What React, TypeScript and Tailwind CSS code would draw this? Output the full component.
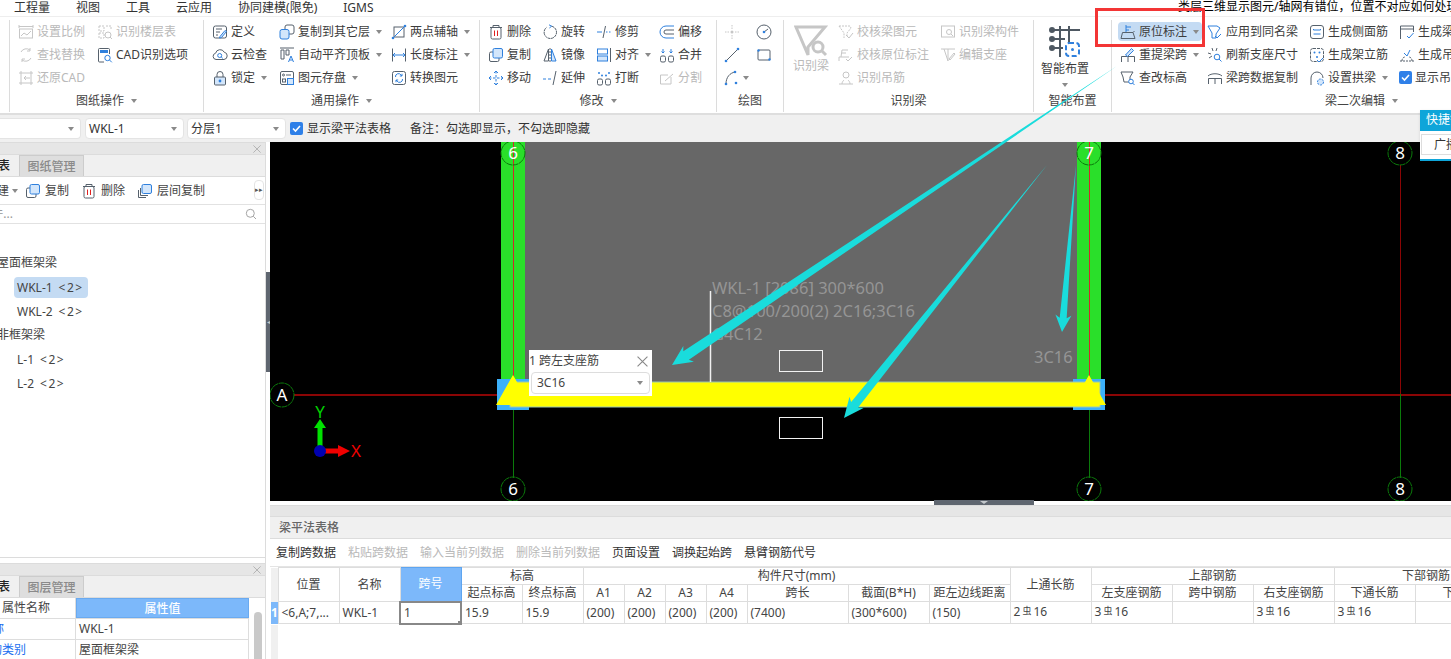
import React from 'react';

const D = '#56616c';
const B = '#2f80dd';
const L = '#d3e6fb';
const G = '#c6c6c6';

type IconProps = { c?: string; children: React.ReactNode };

const Ic = ({ c = D, children }: IconProps) => (
  <svg viewBox="0 0 16 16" className="w-4 h-4 shrink-0" fill="none" stroke={c} strokeWidth={1}>
    {children}
  </svg>
);

const Dot = ({ x, y, r = 1 }: { x: number; y: number; r?: number }) => <circle cx={x} cy={y} r={r} fill={B} stroke="none" />;

const icons: Record<string, React.ReactNode> = {
  scale: <Ic c={G}><path d="M1 1v3M15 1v3M1 2.5h14" /><rect x="1.5" y="5" width="13" height="9" /><path d="M3 12l3-3 3 2 4-4" /></Ic>,
  find: <Ic c={G}><path d="M3 5a6 6 0 0 1 9-2M13 11a6 6 0 0 1-9 2M12 1v3h-3M4 15v-3h3" /></Ic>,
  restore: <Ic c={G}><path d="M3 1v14M13 1v14M1 3h14M1 13h14M12 8H6l2-2M6 8l2 2" /></Ic>,
  floor: <Ic c={G}><path d="M2 2h5v5H2zM2 9h5v5H2zM9 2h5v4" strokeDasharray="2 1" /><circle cx="11" cy="11" r="3" /><path d="M13 13l2 2" /></Ic>,
  cadopt: <Ic><path d="M7 15H2.5a1 1 0 0 1-1-1V2.5a1 1 0 0 1 1-1h9a1 1 0 0 1 1 1V7" /><rect x="3" y="3" width="8" height="3" fill={B} stroke="none" /><circle cx="10.5" cy="11" r="2.7" stroke={B} /><path d="M12.5 13l2.3 2.3" stroke={B} /></Ic>,
  define: <Ic><rect x="1.5" y="2" width="13" height="12" rx="2" /><path d="M4 5h6M4 8h4M4 11h2" /><path d="M8 12.5l5-6 1.5 1-5 6-2 .5z" stroke={B} fill={L} /></Ic>,
  cloud: <Ic><path d="M4 12.5a3.2 3.2 0 0 1-.4-6.3 4.6 4.6 0 0 1 8.6-1 3.7 3.7 0 0 1-.2 7.3z" /><circle cx="7.7" cy="8.5" r="2" stroke={B} /><path d="M9.2 10l1.6 1.4" stroke={B} /></Ic>,
  lock: <Ic><rect x="2.5" y="7" width="11" height="8" rx="1" fill={L} /><path d="M5 7V4.5a3 3 0 0 1 6 0V7" /><circle cx="8" cy="11" r="1.4" fill={B} stroke="none" /></Ic>,
  layer: <Ic><rect x="6" y="1" width="9" height="9" rx="2" /><rect x="1" y="5.5" width="9" height="9.5" rx="2" fill={L} stroke={B} /></Ic>,
  top: <Ic><path d="M1 1h14" /><path d="M2 3h3v9H2zM7 3h3v5H7z" /><path d="M9.5 15l2.5-6 2.5 6M10.5 13h3" stroke={B} /></Ic>,
  save: <Ic><rect x="1.5" y="1.5" width="13" height="13" rx="1.5" /><circle cx="4.5" cy="5" r="1" /><path d="M7 5h5" /><rect x="3.5" y="9" width="3" height="3" /><rect x="8.5" y="8.5" width="6" height="6" fill={L} stroke={B} /></Ic>,
  two: <Ic><rect x="3" y="3" width="10" height="10" /><path d="M1 15L15 1" stroke={B} /><Dot x={2} y={14} r={1.3} /><Dot x={14} y={2} r={1.3} /></Ic>,
  len: <Ic><path d="M1.5 1.5v13M14.5 1.5v13" /><path d="M2 8h12M4 6L2 8l2 2M12 6l2 2-2 2" stroke={B} /></Ic>,
  convert: <Ic><rect x="1.5" y="1.5" width="13" height="13" rx="2" /><path d="M4.5 7a3 3 0 0 1 5.5-2l1 1M11 3.8V6H8.8M11.5 9a3 3 0 0 1-5.5 2l-1-1M5 12.2V10h2.2" stroke={B} /></Ic>,
  trash: <Ic><path d="M2 3.5h12M5 3.5V1.5h6v2" /><rect x="3" y="3.5" width="10" height="11.5" rx="1.5" /><path d="M6.5 6.5v5.5M9.5 6.5v5.5" stroke="#e02020" /></Ic>,
  copy: <Ic><rect x="1.5" y="5" width="9.5" height="9.5" rx="1.5" /><rect x="5" y="1.5" width="9.5" height="9.5" rx="1.5" fill={L} stroke={B} /></Ic>,
  move: <Ic c={B}><path d="M8 1v14M1 8h14" strokeDasharray="2.5 1.5" /><path d="M6 3l2-2 2 2M6 13l2 2 2-2M3 6L1 8l2 2M13 6l2 2-2 2" /></Ic>,
  rotate: <Ic><path d="M9.5 2.2a6.2 6.2 0 1 1-5 1.2" strokeDasharray="3 .6" /><path d="M7 .8l2.6 1.4L7.4 4" stroke={B} /></Ic>,
  mirror: <Ic><path d="M6.5 2L2 14h4.5z" /><path d="M9.5 2L14 14H9.5z" fill={L} stroke={B} /><path d="M8 1v14" strokeDasharray="2 1" /></Ic>,
  extend: <Ic><path d="M1 9h3M6 9h3" stroke={B} /><path d="M11 15l3-14" /></Ic>,
  trim: <Ic><path d="M1 8h5" stroke={B} /><path d="M10 8h1.5M13 8h1.5" stroke={B} /><path d="M9.5 2L7 14" /></Ic>,
  align: <Ic><rect x="1.5" y="2" width="10" height="5" stroke={B} /><rect x="1.5" y="9" width="10" height="5" fill={L} stroke={B} /><path d="M14.5 1v14" /></Ic>,
  split: <Ic><rect x="1.5" y="9" width="5" height="6" rx="1.5" /><rect x="9.5" y="9" width="5" height="6" rx="1.5" /><Dot x={3} y={3} /><Dot x={6} y={5.5} /><Dot x={10} y={5.5} /><Dot x={13} y={3} /></Ic>,
  offset: <Ic c={B}><path d="M15 2H7a6 6 0 0 0 0 12h8" /><path d="M15 6H7a2 2 0 0 0 0 4h8" stroke={D} /></Ic>,
  merge: <Ic><rect x="1.5" y="9" width="5" height="6" rx="1.5" /><rect x="9.5" y="9" width="5" height="6" rx="1.5" /><path d="M4 2v4M2.5 4.5L4 6l1.5-1.5M12 2v4M10.5 4.5L12 6l1.5-1.5" stroke={B} /></Ic>,
  cut: <Ic c={G}><path d="M12 7v7H1.5V5H9" /><path d="M6 11l8-7" /></Ic>,
  point: <Ic c={G}><path d="M8 1v4M8 11v4M1 8h4M11 8h4" strokeDasharray="1.5 1" /><circle cx="8" cy="8" r="1.5" fill={G} stroke="none" /></Ic>,
  circle: <Ic><circle cx="8" cy="8" r="7" /><path d="M8 8l4-3" /><Dot x={8} y={8} r={1.3} /></Ic>,
  line: <Ic><path d="M2 14L14 2" /><Dot x={2} y={14} r={1.3} /><Dot x={14} y={2} r={1.3} /></Ic>,
  rect: <Ic><rect x="2" y="3" width="12" height="10" rx="1" /><Dot x={2.5} y={3.5} r={1.2} /><Dot x={13.5} y={12.5} r={1.2} /></Ic>,
  arc: <Ic><path d="M2 14C2 7 6 3 11 2" /><Dot x={2} y={14} r={1.3} /><Dot x={11} y={2} r={1.3} /><Dot x={12} y={13} r={1.3} /></Ic>,
  check1: <Ic c={G}><path d="M1 2h11l1 2-4 5v3M1 2l5 7v5" strokeDasharray="2 1" /><path d="M8 11l3 3 4-5" /></Ic>,
  check2: <Ic c={G}><path d="M1 14v-4h10M3 10l1-7M4 3h6M4 6h4" /><path d="M8 12l2 2 4-4" /></Ic>,
  hang: <Ic c={G}><circle cx="8" cy="5" r="3" /><path d="M1 14h14M4 14c0-2 1-3 2-4M12 14c0-2-1-3-2-4" /></Ic>,
  member: <Ic c={G}><rect x="1.5" y="2" width="13" height="11" /><circle cx="9" cy="8" r="2.5" /><path d="M11 10l2 2" /></Ic>,
  support: <Ic c={G}><path d="M1 2h14M8 2v12M4 2l4 12" /><path d="M9 12l5-6 1 1-5 6z" /></Ic>,
  origin: <Ic><path d="M6 1v7M6 3h5M6 6h3" stroke={B} /><path d="M1 14.5l1.5-6h10.5l2 6zM13 8.5l1.5-1.5" /></Ic>,
  respan: <Ic><path d="M1.5 15V9.5h13V15M8 9.5V15" /><path d="M5.5 8l6-6.5 2 2-6 6z" stroke={B} fill={L} /></Ic>,
  level: <Ic><path d="M1 2h12l-3 5v5H4l-1-5z" /><circle cx="11" cy="11.5" r="2.3" fill="#fff" stroke={B} /><path d="M12.5 13l2 2" stroke={B} /></Ic>,
  apply: <Ic c={B}><path d="M1 2h9l3 2-4 6v4H5V9z" /><path d="M8 12l2 2 4-4" /></Ic>,
  refresh: <Ic><path d="M5 1l1 3M1 6l3 1M10 1L9 4M2 11l3-2" /><circle cx="10" cy="10" r="2.8" stroke={B} /><path d="M12 12l2.5 2.5" stroke={B} /></Ic>,
  beamcopy: <Ic><path d="M1 6c3-3 11-3 14 0M1.5 8.5h13M1.5 8.5V14M8 8.5V14M14.5 8.5V14" /></Ic>,
  side: <Ic><rect x="1.5" y="1.5" width="13" height="13" rx="2.5" /><path d="M4.5 6h7M4.5 10h7M4.5 6V5M11.5 6V5" stroke={B} /></Ic>,
  stand: <Ic><rect x="1.5" y="1.5" width="13" height="13" rx="2.5" strokeDasharray="3 1" /><Dot x={5.5} y={5.5} /><Dot x={10.5} y={5.5} /><Dot x={8} y={10} /><path d="M8 13l2 2 4-4" stroke={B} /></Ic>,
  arch: <Ic><path d="M2 15V8a6 6 0 0 1 12 0" /><circle cx="11.5" cy="12" r="3" fill={L} stroke={B} strokeDasharray="2 1" /></Ic>,
  gen: <Ic><path d="M1.5 15V2h13v6M1.5 5h13" /><path d="M8 12l2 2 4.5-5" stroke={B} /></Ic>,
  hook: <Ic><path d="M5 6l3 3 3-6" stroke={B} /><path d="M1 14h14M3 14c0-3 2-4 3-4M13 14c0-3-2-4-3-4" strokeDasharray="2 1" /></Ic>,
  layercopy: <Ic><path d="M1.5 7v7.5H9M3.5 5v7.5H11" /><rect x="5" y="1.5" width="9.5" height="9" rx="1.5" fill={L} stroke={B} /></Ic>,
};

const Caret = () => <span className="w-0 h-0 border-x-[3px] border-t-[4px] border-x-transparent border-t-[#8a8a8a]" />;

const Cross = ({ s, c }: { s: number; c: string }) => (
  <svg viewBox="0 0 10 10" width={s} height={s} fill="none" stroke={c} className="shrink-0"><path d="M.5.5l9 9M9.5.5l-9 9" /></svg>
);

const Check = () => (
  <svg viewBox="0 0 13 13" className="w-[13px] h-[13px] shrink-0">
    <rect width="13" height="13" rx="2" fill="#2f80e8" />
    <path d="M3 6.5l2.5 2.5L10 4" fill="none" stroke="#fff" strokeWidth="1.6" />
  </svg>
);

type Item = { t: string; i: keyof typeof icons; caret?: boolean; off?: boolean };

const RibbonItem = ({ t, i, caret, off }: Item) => (
  <div className={`h-[23px] flex items-center gap-[3px] whitespace-nowrap ${off ? 'text-[#b9b9b9]' : 'text-[#3c3c3c]'}`}>
    {icons[i]}
    <span>{t}</span>
    {caret && <span className="ml-[3px] flex"><Caret /></span>}
  </div>
);

const Col = ({ w, items }: { w: string; items: Item[] }) => (
  <div className={`flex flex-col shrink-0 ${w}`}>
    {items.map(it => <RibbonItem key={it.t} {...it} />)}
  </div>
);

const Group = ({ w, label, caret, children }: { w: string; label: string; caret?: boolean; children: React.ReactNode }) => (
  <div className={`${w} shrink-0 flex flex-col h-[92px] border-r border-[#dcdcdc] overflow-hidden`}>
    <div className="flex h-[69px] pl-2">{children}</div>
    <div className="flex items-center justify-center gap-[7px] h-[23px] text-[#444]">
      <span>{label}</span>
      {caret && <Caret />}
    </div>
  </div>
);

const Ribbon = () => (
  <div className="h-[99px] flex pt-[3px] border-t border-[#eeeeee] border-b-2 border-b-[#dedede]">
    <div className="w-[10px] h-[92px] border-r border-[#dcdcdc] shrink-0" />
    <Group w="w-[194px]" label="图纸操作" caret>
      <Col w="w-[79px]" items={[{ t: '设置比例', i: 'scale', off: true }, { t: '查找替换', i: 'find', off: true }, { t: '还原CAD', i: 'restore', off: true }]} />
      <Col w="w-[100px]" items={[{ t: '识别楼层表', i: 'floor', off: true }, { t: 'CAD识别选项', i: 'cadopt' }]} />
    </Group>
    <Group w="w-[276px]" label="通用操作" caret>
      <Col w="w-[67px]" items={[{ t: '定义', i: 'define' }, { t: '云检查', i: 'cloud' }, { t: '锁定', i: 'lock', caret: true }]} />
      <Col w="w-[112px]" items={[{ t: '复制到其它层', i: 'layer', caret: true }, { t: '自动平齐顶板', i: 'top', caret: true }, { t: '图元存盘', i: 'save', caret: true }]} />
      <Col w="w-[80px]" items={[{ t: '两点辅轴', i: 'two', caret: true }, { t: '长度标注', i: 'len', caret: true }, { t: '转换图元', i: 'convert' }]} />
    </Group>
    <Group w="w-[237px]" label="修改" caret>
      <Col w="w-[54px]" items={[{ t: '删除', i: 'trash' }, { t: '复制', i: 'copy' }, { t: '移动', i: 'move' }]} />
      <Col w="w-[54px]" items={[{ t: '旋转', i: 'rotate' }, { t: '镜像', i: 'mirror' }, { t: '延伸', i: 'extend' }]} />
      <Col w="w-[63px]" items={[{ t: '修剪', i: 'trim' }, { t: '对齐', i: 'align', caret: true }, { t: '打断', i: 'split' }]} />
      <Col w="w-[50px]" items={[{ t: '偏移', i: 'offset' }, { t: '合并', i: 'merge' }, { t: '分割', i: 'cut', off: true }]} />
    </Group>
    <Group w="w-[67px]" label="绘图">
      <div className="flex flex-col w-[32px] shrink-0 -ml-px">
        <div className="h-[23px] flex items-center">{icons.point}</div>
        <div className="h-[23px] flex items-center">{icons.line}</div>
        <div className="h-[23px] flex items-center gap-[3px]">{icons.arc}<Caret /></div>
      </div>
      <div className="flex flex-col shrink-0">
        <div className="h-[23px] flex items-center">{icons.circle}</div>
        <div className="h-[23px] flex items-center">{icons.rect}</div>
      </div>
    </Group>
    <Group w="w-[250px]" label="识别梁">
      <div className="w-[54px] -ml-2 shrink-0 flex flex-col items-center text-[#b9b9b9]">
        <svg viewBox="0 0 34 32" className="w-[34px] h-[32px] mt-[5px]" fill="none" stroke={G} strokeWidth="3">
          <path d="M2 2h29L14 22v8L2 2z" />
          <circle cx="24" cy="22" r="5" fill="#fff" />
          <path d="M28 26l4 4" />
        </svg>
        <span className="mt-[3px]">识别梁</span>
      </div>
      <Col w="w-[102px]" items={[{ t: '校核梁图元', i: 'check1', off: true }, { t: '校核原位标注', i: 'check2', off: true }, { t: '识别吊筋', i: 'hang', off: true }]} />
      <Col w="w-[90px]" items={[{ t: '识别梁构件', i: 'member', off: true }, { t: '编辑支座', i: 'support', off: true }]} />
    </Group>
    <Group w="w-[78px]" label="智能布置">
      <div className="w-[62px] -ml-2 shrink-0 flex flex-col items-center text-[#3c3c3c]">
        <svg viewBox="0 0 32 32" className="w-8 h-8 mt-[5px]" fill="none" stroke="#4e5862" strokeWidth="2">
          <path d="M4 5h27M4 14h12M4 23h10M11 1v31M20 1v17" />
          <circle cx="3" cy="5" r="2" fill="#4e5862" />
          <circle cx="3" cy="14" r="2" fill="#4e5862" />
          <circle cx="3" cy="23" r="2" fill="#4e5862" />
          <rect x="17" y="18" width="13" height="13" rx="3" fill="#fff" stroke={B} strokeDasharray="5 2.5" />
          <circle cx="23.5" cy="24.5" r="1.5" fill={B} stroke="none" />
        </svg>
        <span className="mt-[4px] leading-[16px]">智能布置</span>
        <span className="mt-[6px] flex"><Caret /></span>
      </div>
    </Group>
    <div className="flex-1 flex flex-col h-[92px] overflow-hidden">
      <div className="flex h-[69px] pl-2">
        <div className="w-[87px] shrink-0 flex flex-col">
          <div className="relative"><span className="absolute -left-[2px] top-[2px] w-[84px] h-[19px] rounded bg-[#c4dbf3]" /><div className="relative"><RibbonItem t="原位标注" i="origin" caret /></div></div>
          <RibbonItem t="重提梁跨" i="respan" caret />
          <RibbonItem t="查改标高" i="level" />
        </div>
        <Col w="w-[102px]" items={[{ t: '应用到同名梁', i: 'apply' }, { t: '刷新支座尺寸', i: 'refresh' }, { t: '梁跨数据复制', i: 'beamcopy' }]} />
        <Col w="w-[90px]" items={[{ t: '生成侧面筋', i: 'side' }, { t: '生成架立筋', i: 'stand' }, { t: '设置拱梁', i: 'arch', caret: true }]} />
        <div className="flex flex-col w-[80px] shrink-0">
          <RibbonItem t="生成梁加腋" i="gen" />
          <RibbonItem t="生成吊筋" i="hook" />
          <div className="h-[23px] flex items-center gap-[3px] text-[#3c3c3c] whitespace-nowrap"><Check /><span>显示吊筋</span></div>
        </div>
      </div>
      <div className="h-[23px] flex items-center gap-[7px] pl-[213px] text-[#444]"><span>梁二次编辑</span><Caret /></div>
    </div>
  </div>
);

const Select = ({ w, v }: { w: string; v: string }) => (
  <div className={`${w} h-[21px] shrink-0 bg-white border border-[#e4e4e4] rounded flex items-center justify-between pl-[3px] pr-[6px] text-[#333]`}>
    <span>{v}</span>
    <Caret />
  </div>
);

const PanelHead = ({ tab2, first }: { tab2: string; first: string }) => (
  <>
    <div className="h-[11px] bg-[#e6e6e6] border-y border-[#dcdcdc] flex items-center justify-end pr-[4px] box-content"><Cross s={8} c="#a8a8a8" /></div>
    <div className="h-[22px] bg-[#f0f0f0] border-b border-[#dcdcdc] flex">
      <div className="w-[18px] pr-[8px] flex justify-end overflow-hidden leading-[22px] text-[#222] font-medium whitespace-nowrap">{first}</div>
      <div className="w-[65px] ml-px bg-[#dedede] border border-b-0 border-[#cccccc] text-center leading-[21px] text-[#8a8a8a] font-medium">{tab2}</div>
    </div>
  </>
);

const TreeLeaf = ({ name, on }: { name: string; on?: boolean }) => (
  <div className="h-6 pl-[14px] flex items-center">
    <span className={`w-[74px] h-[21px] rounded pl-[3px] leading-[21px] whitespace-nowrap ${on ? 'bg-[#c4dbf3]' : ''}`}>
      {name}<span className="ml-[6px] tracking-[1.5px]">&lt;2&gt;</span>
    </span>
  </div>
);

const Tree = () => (
  <div className="flex-1 pt-[27px] text-[#444] leading-[24px] overflow-hidden">
    <div className="-ml-[3px] h-6">屋面框架梁</div>
    <TreeLeaf name="WKL-1" on />
    <TreeLeaf name="WKL-2" />
    <div className="-ml-[3px] h-6">非框架梁</div>
    <TreeLeaf name="L-1" />
    <TreeLeaf name="L-2" />
  </div>
);

const LeftPanel = () => (
  <div className="w-[266px] shrink-0 flex flex-col border-r border-[#dcdcdc] bg-white">
    <div className="h-[416px] flex flex-col border-b border-[#dcdcdc]">
      <PanelHead first="构件列表" tab2="图纸管理" />
      <div className="h-[28px] border-b border-[#e2e2e2] flex items-center text-[#444] relative">
        <div className="w-[9px] flex justify-end overflow-hidden whitespace-nowrap shrink-0">新建</div>
        <span className="ml-[3px] mr-[7px] flex"><Caret /></span>
        <div className="flex items-center gap-[4px] mr-[12px]">{icons.copy}复制</div>
        <div className="flex items-center gap-[4px] mr-[12px]">{icons.trash}删除</div>
        <div className="flex items-center gap-[4px]">{icons.layercopy}层间复制</div>
        <div className="absolute right-[1px] top-[3px] w-[10px] h-[20px] border border-[#e4e4e4] rounded text-[7px] leading-[18px] text-center text-[#555]">▸▸</div>
      </div>
      <div className="h-[19px] border-b border-[#e2e2e2] flex items-center justify-between pr-[8px] text-[#9a9a9a]">
        <div className="w-[13px] flex justify-end overflow-hidden whitespace-nowrap">搜索构件...</div>
        <svg viewBox="0 0 12 12" className="w-3 h-3" fill="none" stroke="#a5a5a5"><circle cx="5.3" cy="5.3" r="4" /><path d="M8.3 8.3L11 11" /></svg>
      </div>
      <Tree />
    </div>
    <div className="h-[5px]" />
    <PanelHead first="属性列表" tab2="图层管理" />
    <div className="flex-1 flex overflow-hidden">
      <div className="w-[249px] shrink-0">
        <div className="h-[21px] flex border-b border-[#dddddd]">
          <div className="w-[76px] pl-[2px] text-[#444] leading-[20px] border-r border-[#dddddd]">属性名称</div>
          <div className="flex-1 bg-[#7cb8fa] border border-[#6aaaf0] text-white text-center font-medium leading-[19px]">属性值</div>
        </div>
        <div className="h-[21px] flex border-b border-[#dddddd] leading-[20px]">
          <div className="w-[76px] border-r border-[#dddddd] text-[#1a6ff0] overflow-hidden"><span className="-ml-[8px] block">称</span></div>
          <div className="flex-1 pl-[3px] text-[#444] border-r border-[#dddddd]">WKL-1</div>
        </div>
        <div className="h-[21px] flex leading-[20px]">
          <div className="w-[76px] border-r border-[#dddddd] text-[#1a6ff0] overflow-hidden whitespace-nowrap"><span className="-ml-[10px] block">构类别</span></div>
          <div className="flex-1 pl-[3px] text-[#444] border-r border-[#dddddd]">屋面框架梁</div>
        </div>
      </div>
      <div className="flex-1 pl-[5px] pt-[14px]"><div className="w-[8px] h-[60px] rounded bg-[#c9c9c9]" /></div>
    </div>
  </div>
);

const Bubble = ({ x, y, t }: { x: number; y: number; t: string }) => (
  <g>
    <circle cx={x} cy={y} r="12" fill="none" stroke="#0b7a0b" strokeDasharray="6 .6" />
    <text x={x} y={y + 6} textAnchor="middle" fill="#fff" fontSize="17" fontFamily="'Noto Sans',sans-serif">{t}</text>
  </g>
);

const cadText = "'Noto Sans',sans-serif";

const Canvas = () => (
  <div className="h-[359px] relative bg-black overflow-hidden">
    <svg viewBox="270 142 1181 359" className="block w-full h-full">
      <rect x="525" y="142" width="552" height="241" fill="#676767" />
      <rect x="501" y="142" width="24" height="240" fill="#2adf2a" />
      <rect x="1077" y="142" width="24" height="240" fill="#2adf2a" />
      <path d="M294 395H1451" stroke="#8b0505" strokeWidth="2" />
      <path d="M513.5 142V380M1089.5 142V380" stroke="#d02a2a" />
      <path d="M513.5 407V478M1089.5 407V478M1400.5 394V478" stroke="#0b7a0b" />
      <path d="M1400.5 165V394" stroke="#8b0505" />
      <rect x="497" y="379" width="32" height="31" fill="#3cb0fa" />
      <rect x="1073" y="379" width="32" height="31" fill="#3cb0fa" />
      <rect x="510" y="382" width="590" height="25" fill="#ffff00" stroke="#9cc8b0" strokeWidth="1" />
      <path d="M513 375L496 405H530zM1089 375L1072 405H1106z" fill="#ffff00" />
      <path d="M710.5 291V382" stroke="#f0f0f0" strokeWidth="1.5" />
      <rect x="779.5" y="350.5" width="43" height="21" fill="none" stroke="#f2f2f2" />
      <rect x="779.5" y="417.5" width="43" height="21" fill="none" stroke="#f2f2f2" />
      <g fill="#959595" fontSize="16.5" fontFamily={cadText}>
        <text x="712" y="294">WKL-1 [2086] 300*600</text>
        <text x="712" y="317">C8@100/200(2) 2C16;3C16</text>
        <text x="712" y="340">G4C12</text>
        <text x="1034" y="363">3C16</text>
      </g>
      <Bubble x={513} y={153} t="6" />
      <Bubble x={1089} y={153} t="7" />
      <Bubble x={1400} y={153} t="8" />
      <Bubble x={513} y={489} t="6" />
      <Bubble x={1089} y={489} t="7" />
      <Bubble x={1400} y={489} t="8" />
      <Bubble x={282} y={395} t="A" />
      <path d="M317.5 451V428H314L320 419L326 428H322.5V451z" fill="#00e000" />
      <path d="M320 448.5H338V445L350 451L338 457V453.5H320z" fill="#f00000" />
      <circle cx="320" cy="451" r="6" fill="#0000b0" />
      <text x="320" y="418" textAnchor="middle" fill="#00d000" fontSize="17" fontFamily={cadText}>Y</text>
      <text x="351" y="457" fill="#f00000" fontSize="17" fontFamily={cadText}>X</text>
    </svg>
    <div className="absolute left-[259px] top-[208px] w-[123px] h-[46px] bg-white px-[2px]">
      <div className="h-[22px] flex items-center justify-between -ml-[2px] pr-[2px] text-[#444]">
        <span>1 跨左支座筋</span>
        <Cross s={11} c="#888888" />
      </div>
      <div className="h-[22px] border border-[#dddddd] rounded flex items-center justify-between pl-[5px] pr-[6px] text-[#444]">
        <span>3C16</span>
        <Caret />
      </div>
    </div>
  </div>
);

const th = 'border border-[#dddddd] font-normal text-center text-[#444] p-0 leading-[16px] whitespace-nowrap overflow-hidden';
const td = 'border border-[#dddddd] text-left text-[#444] pl-[3px] p-0 leading-[20px] whitespace-nowrap overflow-hidden';

const Rebar = ({ n }: { n: number }) => (
  <>
    {n}
    <span className="text-[9px] relative -top-[2px] mx-[2px]">虫</span>
    16
  </>
);

const BeamTable = () => (
  <table className="table-fixed border-collapse w-[1247px] text-[12px]">
    <colgroup>
      <col className="w-[7px]" />
      {[61, 61, 61, 61, 61, 41, 41, 41, 41, 101, 81, 81, 81, 81, 81, 81, 81, 103].map((w, i) => <col key={i} style={{ width: w }} />)}
    </colgroup>
    <thead>
      <tr className="h-[17px]">
        <th rowSpan={2} className="bg-[#f0f0f0] border-0" />
        <th rowSpan={2} className={th}>位置</th>
        <th rowSpan={2} className={th}>名称</th>
        <th rowSpan={2} className={`${th} !bg-[#7cb8fa] !text-white font-medium !border-[#5ea5f0]`}>跨号</th>
        <th colSpan={2} className={th}>标高</th>
        <th colSpan={7} className={th}>构件尺寸(mm)</th>
        <th rowSpan={2} className={th}>上通长筋</th>
        <th colSpan={3} className={th}>上部钢筋</th>
        <th colSpan={2} className={th}>下部钢筋</th>
      </tr>
      <tr className="h-[17px]">
        {['起点标高', '终点标高', 'A1', 'A2', 'A3', 'A4', '跨长', '截面(B*H)', '距左边线距离', '左支座钢筋', '跨中钢筋', '右支座钢筋', '下通长筋', '下部钢筋'].map(h => (
          <th key={h + 'x'} className={th}>{h}</th>
        ))}
      </tr>
    </thead>
    <tbody>
      <tr className="h-[21px]">
        <td className="bg-[#7cb8fa] text-white font-bold text-center p-0 leading-[20px]">1</td>
        <td className={td}>&lt;6,A;7,...</td>
        <td className={td}>WKL-1</td>
        <td className="relative border-2 border-[#888888] text-[#444] pl-[3px] p-0 leading-[19px]">1<span className="absolute -right-[2px] -bottom-[2px] w-[4px] h-[4px] bg-[#888888]" /></td>
        <td className={td}>15.9</td>
        <td className={td}>15.9</td>
        <td className={td}>(200)</td>
        <td className={td}>(200)</td>
        <td className={td}>(200)</td>
        <td className={td}>(200)</td>
        <td className={td}>(7400)</td>
        <td className={td}>(300*600)</td>
        <td className={td}>(150)</td>
        <td className={td}><Rebar n={2} /></td>
        <td className={td}><Rebar n={3} /></td>
        <td className={td} />
        <td className={td}><Rebar n={3} /></td>
        <td className={td}><Rebar n={3} /></td>
        <td className={td} />
      </tr>
    </tbody>
  </table>
);

const BottomPanel = () => (
  <div className="flex-1 flex flex-col mt-[4px] overflow-hidden">
    <div className="h-[12px] shrink-0 bg-[#e6e6e6] border-y border-[#dcdcdc]" />
    <div className="h-[22px] shrink-0 bg-[#f0f0f0] border-b border-[#dcdcdc] pl-[9px] leading-[21px] text-[#666] font-medium">梁平法表格</div>
    <div className="h-[28px] shrink-0 flex items-center gap-3 pl-[6px] text-[#333] border-b border-[#e4e4e4]">
      <span>复制跨数据</span>
      <span className="text-[#b9b9b9]">粘贴跨数据</span>
      <span className="text-[#b9b9b9]">输入当前列数据</span>
      <span className="text-[#b9b9b9]">删除当前列数据</span>
      <span>页面设置</span>
      <span>调换起始跨</span>
      <span>悬臂钢筋代号</span>
    </div>
    <div className="pl-px overflow-hidden flex-1 flex flex-col">
      <BeamTable />
      <div className="w-[7px] flex-1 bg-[#f0f0f0]" />
    </div>
  </div>
);

const arrow = (x1: number, y1: number, x2: number, y2: number, w: number, hw: number, hl: number) => {
  const len = Math.hypot(x2 - x1, y2 - y1);
  const ux = (x2 - x1) / len;
  const uy = (y2 - y1) / len;
  const bx = x2 - ux * hl;
  const by = y2 - uy * hl;
  const sx = bx + ux * 3;
  const sy = by + uy * 3;
  const p = (x: number, y: number, d: number) => `${x - uy * d},${y + ux * d}`;
  return [`${x1},${y1}`, p(sx, sy, w / 2), p(bx, by, hw / 2), `${x2},${y2}`, p(bx, by, -hw / 2), p(sx, sy, -w / 2)].join(' ');
};

export default function App() {
  return (
    <div className="relative w-[1451px] h-[659px] overflow-hidden bg-white text-[12px] leading-none [font-family:'Noto_Sans','Noto_Sans_CJK_SC',sans-serif]">
      <div className="h-4 flex items-center gap-[26px] pl-[14px] text-[#333]">
        <span>工程量</span>
        <span>视图</span>
        <span>工具</span>
        <span>云应用</span>
        <span>协同建模(限免)</span>
        <span>IGMS</span>
      </div>
      <Ribbon />
      <div className="h-[27px] bg-[#f0f0f0] flex items-center text-[#333]">
        <Select w="w-[81px] rounded-l-none border-l-0" v="" />
        <div className="w-[4px]" />
        <Select w="w-[99px]" v="WKL-1" />
        <div className="w-[3px]" />
        <Select w="w-[99px]" v="分层1" />
        <div className="w-[4px]" />
        <Check />
        <span className="ml-[4px]">显示梁平法表格</span>
        <span className="ml-[19px]">备注：勾选即显示，不勾选即隐藏</span>
      </div>
      <div className="flex h-[517px]">
        <LeftPanel />
        <div className="w-[4px] shrink-0 pt-[130px]">
          <div className="h-[100px] bg-[#5f6670] flex items-center justify-center text-[#c4c8cc] text-[6px]">◂</div>
        </div>
        <div className="flex-1 flex flex-col min-w-0">
          <Canvas />
          <BottomPanel />
        </div>
      </div>

      <div className="absolute left-[934px] top-[500px] w-[100px] h-[5px] bg-[#5f6670] flex justify-center">
        <span className="mt-[1px] w-0 h-0 border-x-[4px] border-t-[3px] border-x-transparent border-t-[#c4c8cc]" />
      </div>
      <div className="absolute left-[1178px] top-0 h-[14px] pr-2 bg-white text-black leading-[13px] whitespace-nowrap">类层三维显示图元/轴网有错位，位置不对应如何处理</div>
      <div className="absolute left-[1420px] top-[110px] w-[60px] h-[51px] bg-white border-b-2 border-[#0ea5d9] shadow">
        <div className="h-[21px] bg-[#0ea5d9] text-white pl-[6px] leading-[20px]">快捷键</div>
        <div className="ml-px mt-[3px] h-[21px] border border-[#dddddd] pl-[12px] leading-[20px] text-[#333]">广播</div>
      </div>
      <svg viewBox="0 0 1451 659" className="absolute inset-0 w-[1451px] h-[659px] pointer-events-none" fill="#19dcdc">
        <polygon points={arrow(1117, 66, 672, 365, 10, 19, 20)} />
        <polygon points={arrow(1047, 165, 844, 418, 9, 18, 20)} />
        <polygon points={arrow(1076, 165, 1062, 332, 7, 16, 17)} />
      </svg>
      <div className="absolute left-[1095px] top-[8px] w-[110px] h-[39px] border-[3px] border-[#f33535]" />
    </div>
  );
}
